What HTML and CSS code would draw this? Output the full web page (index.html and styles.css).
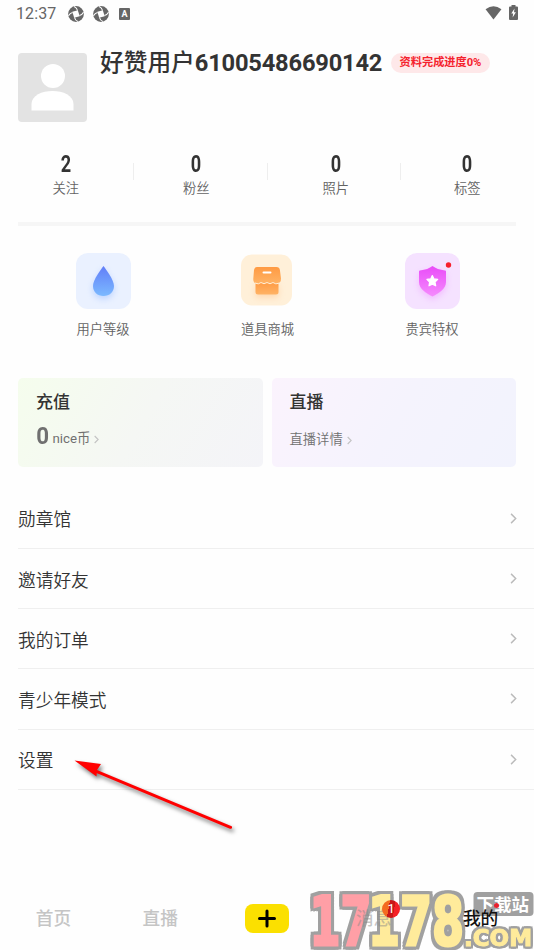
FILE: index.html
```html
<!DOCTYPE html>
<html lang="zh-CN">
<head>
<meta charset="utf-8">
<title>我的</title>
<link rel="stylesheet" href="styles.css">
</head>
<body>
<svg width="0" height="0" class="defs" aria-hidden="true">
  <defs>
    <symbol id="chev" viewBox="0 0 6 10"><path d="M.8.8 5 5 .8 9.200" fill="none" stroke="currentColor" stroke-width="1.300"/></symbol>
    <symbol id="swirl" viewBox="0 0 16 16"><circle cx="8" cy="8" r="7.900" fill="currentColor"/><path d="M4.300 5.800 9.800 4.200 11.700 10.200 6.200 11.800Z" fill="#fefefe"/><g fill="none" stroke="#fefefe" stroke-width="1.100"><path id="slit" d="M9.500 4.500Q9 2 6.200.5"/><use href="#slit" transform="rotate(90 8 8)"/><use href="#slit" transform="rotate(180 8 8)"/><use href="#slit" transform="rotate(270 8 8)"/></g></symbol>
    <linearGradient id="blue" x2="0" y2="1"><stop stop-color="#627ef8"/><stop offset="1" stop-color="#7bb9ff"/></linearGradient>
    <linearGradient id="orange" x2="0" y2="1"><stop stop-color="#ff9a43"/><stop offset="1" stop-color="#ffb365"/></linearGradient>
    <linearGradient id="pink" x2="0" y2="1"><stop stop-color="#e94bf8"/><stop offset="1" stop-color="#f58bfd"/></linearGradient>
  </defs>
</svg>
<header class="status">
  <span class="time">12:37</span>
  <svg class="swirl"><use href="#swirl"/></svg>
  <svg class="swirl"><use href="#swirl"/></svg>
  <span class="keyboard">A</span>
  <svg class="wifi" viewBox="0 0 18 15"><path d="M.5 3.600Q9-2.800 17.500 3.600L9 14.400Z" fill="currentColor"/></svg>
  <svg class="battery" viewBox="0 0 9 15"><path d="M2.500 0h4v1.500H8q1 0 1 1V14q0 1-1 1H1q-1 0-1-1V2.500q0-1 1-1h1.500Z" fill="currentColor"/><path d="M5.500 3.500 2.300 8.500h1.900L3.600 12.500 6.900 7.300H5Z" fill="#fff"/></svg>
</header>
<main>
  <section class="profile">
    <svg class="avatar" viewBox="0 0 69 69"><rect width="69" height="69" rx="4" fill="#e3e3e3"/><circle cx="35" cy="23" r="12" fill="#fff"/><path d="M13.500 57.500V51C13.500 42.500 24 38 34.500 38S55.500 42.500 55.500 51v6.500Z" fill="#fff"/></svg>
    <h1>好赞用户<span>61005486690142</span></h1>
    <span class="progress">资料完成进度0%</span>
  </section>
  <section class="stats">
    <div class="follows"><b>2</b><span>关注</span></div>
    <div class="fans"><b>0</b><span>粉丝</span></div>
    <div class="photos"><b>0</b><span>照片</span></div>
    <div><b>0</b><span>标签</span></div>
  </section>
  <section class="features">
    <div class="feature">
      <svg class="drop" viewBox="0 0 55 56"><rect width="55" height="56" rx="12" fill="#eaf1ff"/><path d="M27.500 13C30 16.500 38 26.500 38 33c0 6-4.500 10-10.500 10S17 39 17 33c0-6.500 8-16.500 10.500-20Z" fill="url(#blue)"/></svg>
      <span>用户等级</span>
    </div>
    <div class="feature">
      <svg class="shop" viewBox="0 0 55 56"><rect x="1" y="1.500" width="51" height="51" rx="11" fill="#fff0d9"/><path d="M15.500 29H38.500v10q0 2.500-2.500 2.500h-18Q15.500 41.500 15.500 39Z" fill="url(#orange)"/><path d="M17 14H36.500q3 0 3.400 3L41 25.500Q41 30 37.500 30.500 35 31 33 29q-3 2.500-6 0-3 2.500-6 0-2 2-4.500 1.500Q13 30 13.300 25.500L14 17q.5-3 3-3Z" fill="url(#orange)"/><path d="M15 30Q18.500 32 21 29.500q3 2.500 6 0 3 2.500 6 0Q35.500 32 39.500 30" fill="none" stroke="#fff0d9" stroke-width="1"/><path d="M23.500 19.500h7" stroke="#fff" stroke-width="2" stroke-linecap="round"/></svg>
      <span>道具商城</span>
    </div>
    <div class="feature">
      <svg class="shield" viewBox="0 0 55 56"><rect width="55" height="56" rx="12" fill="#f5e2ff"/><path d="M27.500 13Q32 16.500 40 17.500q1 0 1 1V29c0 7-7 11-13.500 14.500C21 40 14 36 14 29V18.500q0-1 1-1Q23 16.500 27.500 13Z" fill="url(#pink)"/><path d="m27.300 22.500 1.700 3.400 3.700.5-2.700 2.700.7 3.700-3.400-1.700-3.300 1.700.6-3.700-2.700-2.700 3.800-.5Z" fill="#fff" stroke="#fff" stroke-width="1.200" stroke-linejoin="round"/><circle cx="43.500" cy="12" r="2.700" fill="#f7202c"/></svg>
      <span>贵宾特权</span>
    </div>
  </section>
  <section class="cards">
    <div class="card coins"><h2>充值</h2><p><b>0</b>nice币<svg class="more"><use href="#chev"/></svg></p></div>
    <div class="card live"><h2>直播</h2><p>直播详情<svg class="more"><use href="#chev"/></svg></p></div>
  </section>
  <ul class="menu">
    <li><span>勋章馆</span><svg><use href="#chev"/></svg></li>
    <li><span>邀请好友</span><svg><use href="#chev"/></svg></li>
    <li><span>我的订单</span><svg><use href="#chev"/></svg></li>
    <li><span>青少年模式</span><svg><use href="#chev"/></svg></li>
    <li><span>设置</span><svg><use href="#chev"/></svg></li>
  </ul>
</main>
<svg class="arrow" viewBox="0 0 180 90"><path d="M34 30.300 170.500 87.300" stroke="#f00" stroke-width="3" stroke-linecap="round"/><path d="M14.500 20.500 41 24 37 30 36.500 36.500Z" fill="#f00"/></svg>
<svg class="watermark" viewBox="0 0 230 70">
  <text class="digits red" x="5.500" y="64.500" textLength="62" lengthAdjust="spacingAndGlyphs">17</text>
  <text class="digits yellow" x="64" y="64.500" textLength="96" lengthAdjust="spacingAndGlyphs">178</text>
  <text class="com" x="160" y="65.500" textLength="68" lengthAdjust="spacingAndGlyphs">.COM</text>
  <rect x="169.500" y="12" width="60" height="24" rx="4" fill="#a0a0a0"/>
  <text class="station" x="172.500" y="31">下载站</text>
</svg>
<nav>
  <span>首页</span>
  <span>直播</span>
  <span class="plus"><svg viewBox="0 0 44 29"><rect width="44" height="29" rx="8" fill="#fbe000"/><path d="M14.500 14.500h15M22 7v15" stroke="#000" stroke-width="3" stroke-linecap="round"/></svg></span>
  <span class="messages">消息<i class="badge">1</i></span>
  <span class="current">我的</span>
</nav>
</body>
</html>
```
FILE: styles.css
```css
* { box-sizing: border-box; }
body { margin: 0; width: 534px; height: 950px; overflow: hidden; position: relative; background: #fefefe; color: #333; font-family: Roboto, "Noto Sans CJK SC", sans-serif; }
h1, h2, p, ul { margin: 0; padding: 0; font-weight: 500; }
svg { display: block; flex: none; }
.defs { position: absolute; }
.status { height: 28px; padding: 0 16px; display: flex; align-items: center; color: #666; }
.time { font-size: 16px; letter-spacing: .1px; width: 52px; line-height: 28px; }
.swirl { width: 16px; height: 16px; margin-right: 9px; }
.keyboard { width: 11px; height: 12px; margin-left: 1px; background: #666; color: #fff; font-size: 9px; line-height: 12px; font-weight: 700; text-align: center; border-radius: 1px; }
.wifi { width: 17px; height: 14px; margin: -2px 7px 0 auto; }
.battery { width: 9px; height: 15px; margin-top: -3px; }
main { padding-left: 18px; }
.profile { height: 94px; display: flex; align-items: flex-start; padding-top: 25px; }
.avatar { width: 69px; height: 69px; }
h1 { width: 282px; margin: -7px 9px 0 13px; font-size: 23.7px; line-height: 35px; white-space: nowrap; }
h1 span { font-weight: 700; letter-spacing: -.2px; }
.progress { width: 99px; height: 20px; border-radius: 10px; background: #fee8e9; color: #f5222d; font-size: 11.2px; font-weight: 700; line-height: 20px; text-align: center; white-space: nowrap; }
.stats { display: grid; grid-template-columns: repeat(4, 133.5px); margin-left: -18px; height: 100px; padding-top: 28px; }
.stats div { position: relative; height: 48px; display: flex; flex-direction: column; align-items: center; }
.stats .follows { padding-right: 2px; }
.stats .fans { padding-right: 8px; }
.stats .photos { padding-left: 4px; }
.stats div + div::before { content: ""; position: absolute; left: -.5px; top: 13px; width: 1px; height: 17px; background: #eee; }
.stats b { font-size: 24.5px; line-height: 28px; margin-bottom: 1px; transform: scaleX(.74); }
.stats span, .feature span { font-size: 13.3px; line-height: 20px; color: #636363; font-weight: 350; }
.features { width: 498px; border-top: 4px solid #f6f6f6; padding: 27px 49px 0 50px; height: 156px; display: flex; justify-content: space-between; }
.feature { width: 70px; display: flex; flex-direction: column; align-items: center; }
.feature svg { width: 55px; height: 56px; margin-bottom: 11px; }
.drop path { filter: drop-shadow(0 3px 3px #7da9ff66); }
.shop path:nth-of-type(1) { filter: drop-shadow(0 3px 3px #ffac6055); }
.shield path:nth-of-type(1) { filter: drop-shadow(0 3px 3px #ed73ff55); }
.cards { display: flex; gap: 9px; width: 498px; }
.card { flex: 1; height: 89px; border-radius: 5px; padding: 11px 18px; }
.coins { background: linear-gradient(120deg, #f5fded, #f5f7f4 50%, #f4f4f8); }
.live { background: linear-gradient(120deg, #fbf3fd, #f5f3fd 50%, #f2f3fd); }
h2 { font-size: 17px; line-height: 26px; }
.card p { display: flex; align-items: center; color: #707070; font-size: 13.3px; font-weight: 350; line-height: 20px; margin-top: 15px; }
.coins p { margin-top: 14px; font-weight: 400; }
.coins b { font-size: 23.5px; line-height: 20px; margin-right: 3px; position: relative; top: -3px; transform: scaleX(.95); }
.more { width: 5px; height: 9px; margin-left: 4px; color: #c3c3c3; }
.menu { margin-top: 21.5px; list-style: none; }
.menu li { height: 60.25px; border-bottom: 1px solid #efefef; padding-right: 17px; display: flex; justify-content: space-between; align-items: center; font-size: 17.7px; font-weight: 350; color: #333; }
.menu span { padding-top: .5px; }
.menu svg { width: 7px; height: 11px; color: #bbb; }
.arrow { position: absolute; left: 60px; top: 740px; width: 180px; height: 90px; overflow: visible; filter: drop-shadow(2px 3px 2px #0008); }
nav { position: absolute; left: 0; bottom: 0; width: 534px; height: 64px; display: grid; grid-template-columns: repeat(5, 1fr); justify-items: center; align-items: center; color: #c5c5c5; font-size: 17.7px; font-weight: 500; }
nav > span { position: relative; top: -1px; }
nav > .plus { top: 0; }
.plus svg { width: 44px; height: 29px; }
.messages { color: #8887; }
.current { color: #111; }
.current::after { content: ""; position: absolute; right: -1px; top: -1px; width: 5px; height: 5px; border-radius: 50%; background: #e8202c; }
.badge { position: absolute; left: 26px; top: -4px; width: 18px; height: 18px; border-radius: 9px; background: linear-gradient(100deg, #f36b20 0 38%, #c91717 38% 65%, #f52025 65%); color: #fff; font: 400 13px/18px Roboto, sans-serif; text-align: center; }
.watermark { position: absolute; left: 304px; top: 880px; width: 230px; height: 70px; }
.watermark text { font-family: "DejaVu Sans", sans-serif; font-weight: 700; }
.digits { font-size: 68px; stroke-width: 3px; filter: drop-shadow(3px 0 0 #a0a0a0) drop-shadow(-3px 0 0 #a0a0a0) drop-shadow(0 3px 0 #a0a0a0) drop-shadow(0 -3px 0 #a0a0a0); }
.red { fill: #ff9fa6; stroke: #ff9fa6; }
.yellow { fill: #ffeb9b; stroke: #ffeb9b; }
.com { font-size: 23px; fill: #ffeb9b; stroke: #ffeb9b; stroke-width: 1px; filter: drop-shadow(2px 0 0 #a0a0a0) drop-shadow(-2px 0 0 #a0a0a0) drop-shadow(0 2px 0 #a0a0a0) drop-shadow(0 -2px 0 #a0a0a0); }
.watermark .station { font: 700 17.5px "Noto Sans CJK SC", sans-serif; fill: #fff; }
```
